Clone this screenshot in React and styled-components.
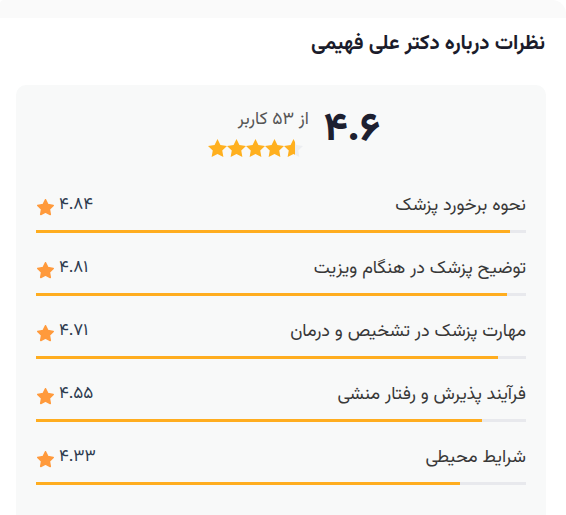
import React from 'react';
import styled, { createGlobalStyle } from 'styled-components';

const Global = createGlobalStyle`
  html, body {
    margin: 0;
    padding: 0;
    background: #ffffff;
  }
  body {
    font-family: "Vazirmatn", "Noto Sans Arabic", "DejaVu Sans", sans-serif;
    direction: rtl;
  }
`;

const Page = styled.div`
  width: 566px;
  height: 515px;
  overflow: hidden;
  box-sizing: border-box;
`;

// faint strip left over from the block above
const TopStrip = styled.div`
  height: 18px;
  background: #fafafa;
  border-top-right-radius: 14px;
  border-top-left-radius: 4px;
`;

const Body = styled.div`
  padding: 0 20px 0 16px;
`;

const Title = styled.h3`
  margin: 12px 1px 27px 0;
  font-size: 20.5px;
  line-height: 28px;
  font-weight: 700;
  color: #1b1c2b;
`;

const Card = styled.div`
  background: #f8f9f9;
  border-radius: 10px;
  padding: 22px 20px 40px;
`;

const Header = styled.div`
  display: flex;
  justify-content: center;
  align-items: flex-start;
  gap: 15px;
  padding-left: 26px;
  margin-bottom: 36px;
`;

const Big = styled.div`
  font-size: 40px;
  font-weight: 800;
  line-height: 46px;
  color: #1d2030;
  direction: ltr;
`;

const Summary = styled.div`
  display: flex;
  flex-direction: column;
  align-items: flex-start;
`;

const Count = styled.div`
  font-size: 17.5px;
  line-height: 26px;
  color: #555;
`;

const Stars = styled.div`
  display: flex;
  direction: ltr;
  margin-top: 6px;
  margin-right: 6px;
`;

const Row = styled.div`
  margin-bottom: 24px;
`;

const RowTop = styled.div`
  display: flex;
  justify-content: space-between;
  align-items: center;
  height: 24px;
`;

const Label = styled.span`
  font-size: 18px;
  color: #383838;
`;

const Value = styled.span`
  display: flex;
  align-items: center;
  direction: ltr;
  gap: 5px;
  font-size: 17px;
  color: #2c3a4e;
  margin-left: 1px;
  margin-top: -2px;
  svg { margin-top: 5px; }
`;

const Track = styled.div`
  direction: ltr;
  height: 3px;
  background: #e8e9ed;
  margin-top: 12px;
`;

const Fill = styled.div`
  height: 100%;
  background: #ffad1f;
`;

const STAR = 'M12 2l3.09 6.26L22 9.27l-5 4.87 1.18 6.88L12 17.77l-6.18 3.25L7 14.14 2 9.27l6.91-1.01L12 2z';

function Star({ part = 1, id }) {
  return (
    <svg width="19" height="19" viewBox="2 2 20 20">
      <defs>
        <linearGradient id={id}>
          <stop offset={part} stopColor="#ffb01f" />
          <stop offset={part} stopColor="#eceef1" />
        </linearGradient>
      </defs>
      <path d={STAR} fill={`url(#${id})`} />
    </svg>
  );
}

function RoundStar() {
  return (
    <svg width="17" height="17" viewBox="1 1 22 22">
      <path d={STAR} fill="#ff9a3c" stroke="#ff9a3c" strokeWidth="2" strokeLinejoin="round" />
    </svg>
  );
}

const items = [
  { title: 'نحوه برخورد پزشک', score: 4.84, txt: '۴.۸۴' },
  { title: 'توضیح پزشک در هنگام ویزیت', score: 4.81, txt: '۴.۸۱' },
  { title: 'مهارت پزشک در تشخیص و درمان', score: 4.71, txt: '۴.۷۱' },
  { title: 'فرآیند پذیرش و رفتار منشی', score: 4.55, txt: '۴.۵۵' },
  { title: 'شرایط محیطی', score: 4.33, txt: '۴.۳۳' },
];

function App() {
  return (
    <Page>
      <Global />
      <TopStrip />
      <Body>
        <Title>نظرات درباره دکتر علی فهیمی</Title>
        <Card>
          <Header>
            <Big>۴.۶</Big>
            <Summary>
              <Count>از ۵۳ کاربر</Count>
              <Stars>
                {[1, 1, 1, 1, 0.6].map((p, i) => (
                  <Star key={i} part={p} id={'st' + i} />
                ))}
              </Stars>
            </Summary>
          </Header>

          {items.map((it) => (
            <Row key={it.title}>
              <RowTop>
                <Label>{it.title}</Label>
                <Value>
                  <RoundStar />
                  {it.txt}
                </Value>
              </RowTop>
              <Track>
                <Fill style={{ width: (it.score / 5) * 100 + '%' }} />
              </Track>
            </Row>
          ))}
        </Card>
      </Body>
    </Page>
  );
}

export default App;
